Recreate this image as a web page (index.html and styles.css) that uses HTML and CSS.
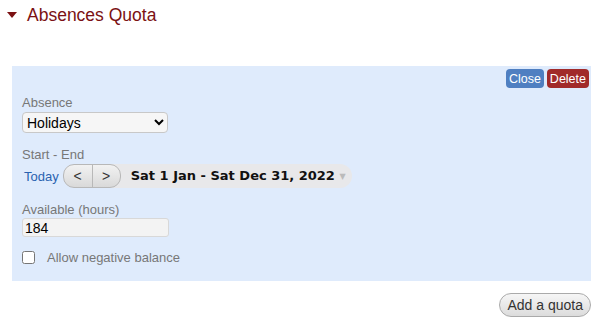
FILE: index.html
```html
<!DOCTYPE html>
<html lang="en">
<head>
  <meta charset="UTF-8">
  <title>Absences Quota</title>
  <link rel="stylesheet" href="styles.css">
</head>
<body>
  <h2 class="section-title"><span class="caret"></span>Absences Quota</h2>

  <div class="quota-panel">
    <div class="panel-actions">
      <button class="btn btn-close">Close</button>
      <button class="btn btn-delete">Delete</button>
    </div>

    <label class="field-label">Absence</label>
    <select class="field-select">
      <option>Holidays</option>
    </select>

    <label class="field-label">Start - End</label>
    <div class="range-row">
      <a class="today-link">Today</a>
      <div class="nav-group">
        <button class="nav-btn">&lt;</button>
        <button class="nav-btn">&gt;</button>
      </div>
      <div class="range-pill">Sat 1 Jan - Sat Dec 31, 2022 <span class="range-arrow">&#9660;</span></div>
    </div>

    <label class="field-label">Available (hours)</label>
    <input class="field-input" type="text" value="184">

    <label class="check-row"><input type="checkbox"> Allow negative balance</label>
  </div>

  <div class="footer-actions">
    <button class="btn-add">Add a quota</button>
  </div>
</body>
</html>
```

FILE: styles.css
```css
body {
  margin: 0;
  padding: 0 9px 0 12px;
  font-family: "Liberation Sans", Arial, sans-serif;
  background: #fff;
  color: #222;
}
.section-title {
  margin: 0 0 0 -5px;
  padding-top: 3px;
  font-size: 17.5px;
  font-weight: normal;
  color: #7b1113;
  display: flex;
  align-items: center;
  height: 24px;
}
.caret {
  width: 0;
  height: 0;
  border-left: 5px solid transparent;
  border-right: 5px solid transparent;
  border-top: 6px solid #7b1113;
  margin-right: 10px;
  margin-left: 0;
}
/* Panel */
.quota-panel {
  margin-top: 39px;
  background: #dfebfc;
  padding: 3px 2px 15px 10px;
  display: flex;
  flex-direction: column;
  align-items: flex-start;
  height: 197px;
}
.panel-actions {
  align-self: flex-end;
  display: flex;
  gap: 3px;
}
.btn {
  border: none;
  border-radius: 4px;
  color: #fff;
  font-family: inherit;
  font-size: 12.5px;
  padding: 0 3px;
  height: 19px;
  cursor: pointer;
}
.btn-close {
  background: #4f7fc1;
}
.btn-delete {
  background: #a12a2a;
}
.field-label {
  font-size: 13px;
  color: #777;
  margin-top: 7px;
  margin-bottom: 2px;
}
.field-select {
  width: 146px;
  height: 21px;
  font-family: inherit;
  font-size: 14px;
  border: 1px solid #c8c8c8;
  border-radius: 4px;
  background: #f6f6f6;
  margin-bottom: 7px;
}
.range-row {
  display: flex;
  align-items: center;
  margin-top: 0;
  margin-bottom: 7px;
}
.today-link {
  color: #2a62b0;
  font-size: 13px;
  margin-left: 2px;
  margin-right: 4px;
}
.nav-group {
  display: flex;
  border: 1px solid #b8b8b8;
  border-radius: 11px;
  background: linear-gradient(#f2f2f2, #d9d9d9);
  position: relative;
  z-index: 1;
}
.nav-btn {
  border: none;
  background: none;
  font-family: inherit;
  font-size: 14px;
  color: #333;
  width: 28px;
  height: 22px;
  padding: 0;
}
.nav-btn + .nav-btn {
  border-left: 1px solid #b8b8b8;
}
.range-pill {
  background: #e8e8ea;
  border-radius: 0 12px 12px 0;
  height: 24px;
  line-height: 24px;
  padding: 0 6px 0 28px;
  margin-left: -18px;
  font-family: "DejaVu Sans", sans-serif;
  font-weight: bold;
  font-size: 13px;
  color: #111;
}
.range-arrow {
  color: #bbb;
  font-size: 8px;
  vertical-align: middle;
}
.field-input {
  width: 141px;
  height: 17px;
  font-family: inherit;
  font-size: 14px;
  border: 1px solid #d8d8d8;
  border-radius: 3px;
  background: #f3f3f3;
  padding: 0 2px;
  margin-top: -1px;
  margin-bottom: 13px;
}
.check-row {
  font-size: 13px;
  color: #777;
  display: flex;
  align-items: center;
}
.check-row input {
  width: 13px;
  height: 13px;
  margin: 0 12px 0 0;
}
/* Footer */
.footer-actions {
  display: flex;
  justify-content: flex-end;
  margin-top: 12px;
}
.btn-add {
  font-family: inherit;
  font-size: 14px;
  color: #333;
  border: 1px solid #aaa;
  border-radius: 12px;
  background: linear-gradient(#f6f6f6, #dcdcdc);
  height: 24px;
  padding: 0 7px;
}
```
